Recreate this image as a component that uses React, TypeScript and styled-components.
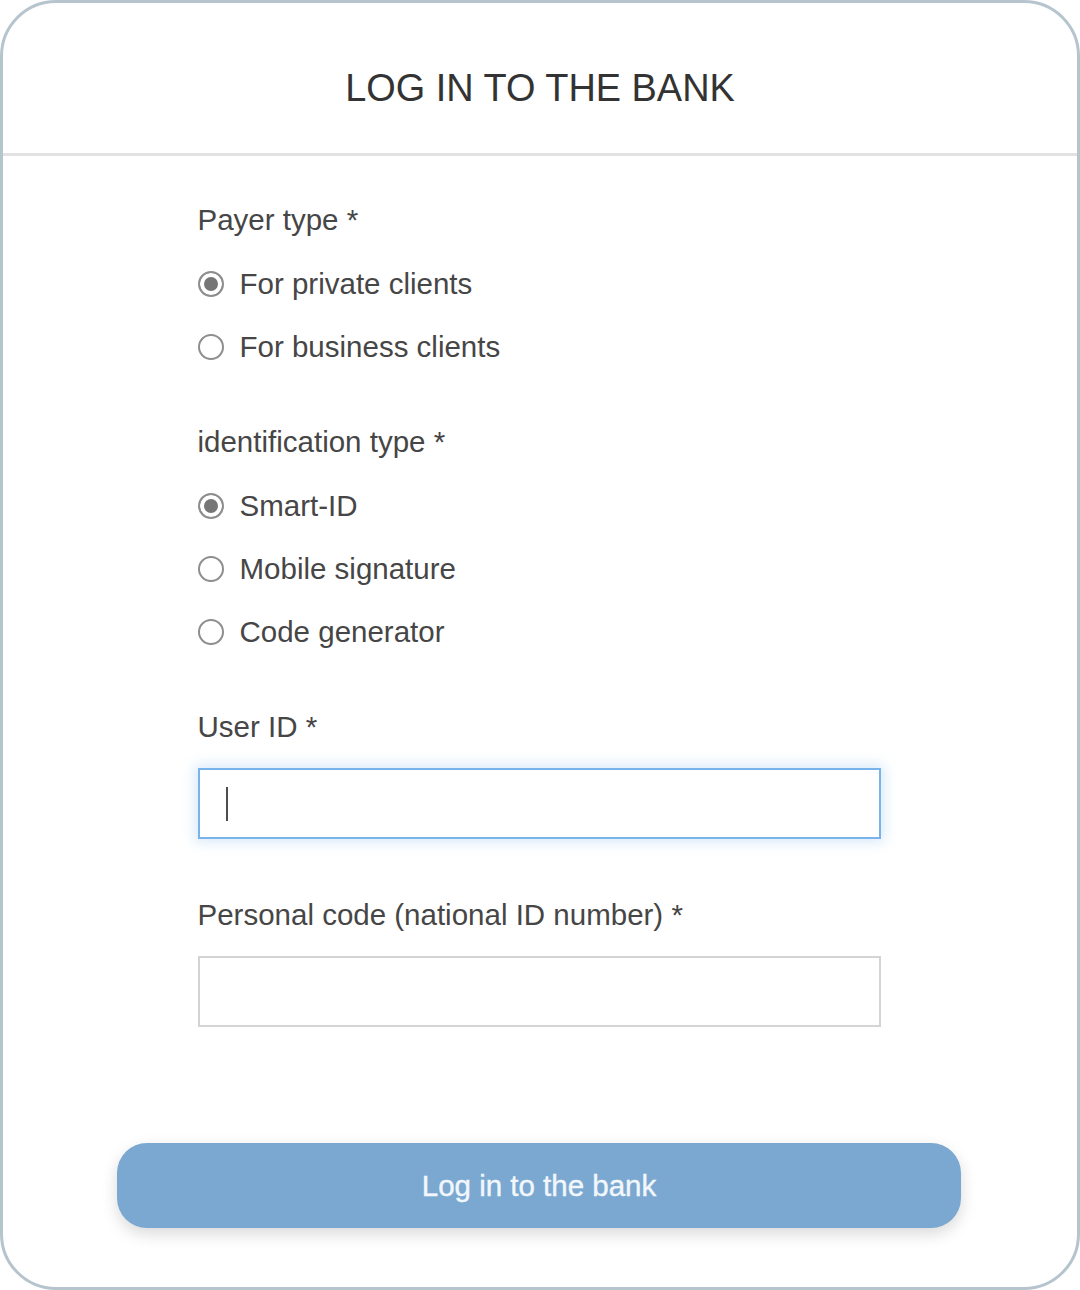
import React from "react";
import styled, { createGlobalStyle } from "styled-components";

const GlobalStyle = createGlobalStyle`
  * { box-sizing: border-box; }
  html, body { margin: 0; padding: 0; background: #ffffff; }
  body { font-family: "Liberation Sans", Arial, sans-serif; }
`;

const Frame = styled.div`
  width: 1080px;
  height: 1290px;
  border: 3px solid #b6c4ce;
  border-radius: 56px;
  background: #ffffff;
  display: flex;
  flex-direction: column;
  overflow: hidden;
`;

const Header = styled.header`
  padding: 64px 0 43px;
  border-bottom: 3px solid #e2e2e2;
  display: flex;
  justify-content: center;
`;

const Title = styled.h1`
  margin: 0;
  font-size: 37.9px;
  line-height: 43px;
  font-weight: 400;
  color: #333333;
`;

const Body = styled.main`
  flex: 1;
  padding: 47px 0 0;
  display: flex;
  flex-direction: column;
  align-items: center;
`;

const Content = styled.div`
  width: 683px;
  margin-left: -2px;
  display: flex;
  flex-direction: column;
`;

const Section = styled.section<{ $gap: number }>`
  display: flex;
  flex-direction: column;
  margin-bottom: ${(p) => p.$gap}px;
`;

const Label = styled.div`
  font-size: 29.5px;
  line-height: 34px;
  color: #464646;
`;

const RadioList = styled.div<{ $top: number }>`
  display: flex;
  flex-direction: column;
  gap: 29px;
  margin-top: ${(p) => p.$top}px;
`;

const RadioRow = styled.label`
  display: flex;
  align-items: center;
  gap: 16px;
  font-size: 29.5px;
  line-height: 34px;
  color: #464646;
`;

const RadioDot = styled.span<{ $checked?: boolean }>`
  width: 26px;
  height: 26px;
  border-radius: 50%;
  border: 2px solid #8e8e8e;
  background: ${(p) => (p.$checked ? "#767676" : "#ffffff")};
  box-shadow: ${(p) => (p.$checked ? "inset 0 0 0 4px #ffffff" : "none")};
  flex-shrink: 0;
  margin-top: -1px;
`;

const InputBox = styled.div<{ $focused?: boolean }>`
  margin-top: 24px;
  height: 71px;
  border: 2px solid ${(p) => (p.$focused ? "#78b3eb" : "#d4d4d4")};
  box-shadow: ${(p) => (p.$focused ? "0 0 12px 3px rgba(122, 181, 236, 0.3)" : "none")};
  background: #ffffff;
  display: flex;
  align-items: center;
  padding-left: 26px;
`;

const Caret = styled.span`
  width: 2px;
  height: 34px;
  background: #4d4d4d;
`;

const SubmitButton = styled.button`
  margin-top: 116px;
  width: 844px;
  height: 85px;
  border: none;
  border-radius: 30px;
  background: #7aa8d0;
  color: #f2f7fc;
  font-family: "Liberation Sans", Arial, sans-serif;
  font-size: 29.5px;
  font-weight: 400;
  -webkit-text-stroke: 0.4px #f2f7fc;
  box-shadow: 0 6px 16px rgba(0, 0, 0, 0.15);
  cursor: pointer;
  margin-left: -2px;
`;

type Option = { label: string; checked?: boolean };

const Radios = ({ options, top }: { options: Option[]; top: number }) => (
  <RadioList $top={top}>
    {options.map((o) => (
      <RadioRow key={o.label}>
        <RadioDot $checked={o.checked} />
        {o.label}
      </RadioRow>
    ))}
  </RadioList>
);

export default function App() {
  return (
    <>
      <GlobalStyle />
      <Frame>
        <Header>
          <Title>LOG IN TO THE BANK</Title>
        </Header>
        <Body>
          <Content>
            <Section $gap={61}>
              <Label>Payer type *</Label>
              <Radios
                top={30}
                options={[
                  { label: "For private clients", checked: true },
                  { label: "For business clients" },
                ]}
              />
            </Section>
            <Section $gap={61}>
              <Label>identification type *</Label>
              <Radios
                top={30}
                options={[
                  { label: "Smart-ID", checked: true },
                  { label: "Mobile signature" },
                  { label: "Code generator" },
                ]}
              />
            </Section>
            <Section $gap={59}>
              <Label>User ID *</Label>
              <InputBox $focused>
                <Caret />
              </InputBox>
            </Section>
            <Section $gap={0}>
              <Label>Personal code (national ID number) *</Label>
              <InputBox />
            </Section>
          </Content>
          <SubmitButton>Log in to the bank</SubmitButton>
        </Body>
      </Frame>
    </>
  );
}
